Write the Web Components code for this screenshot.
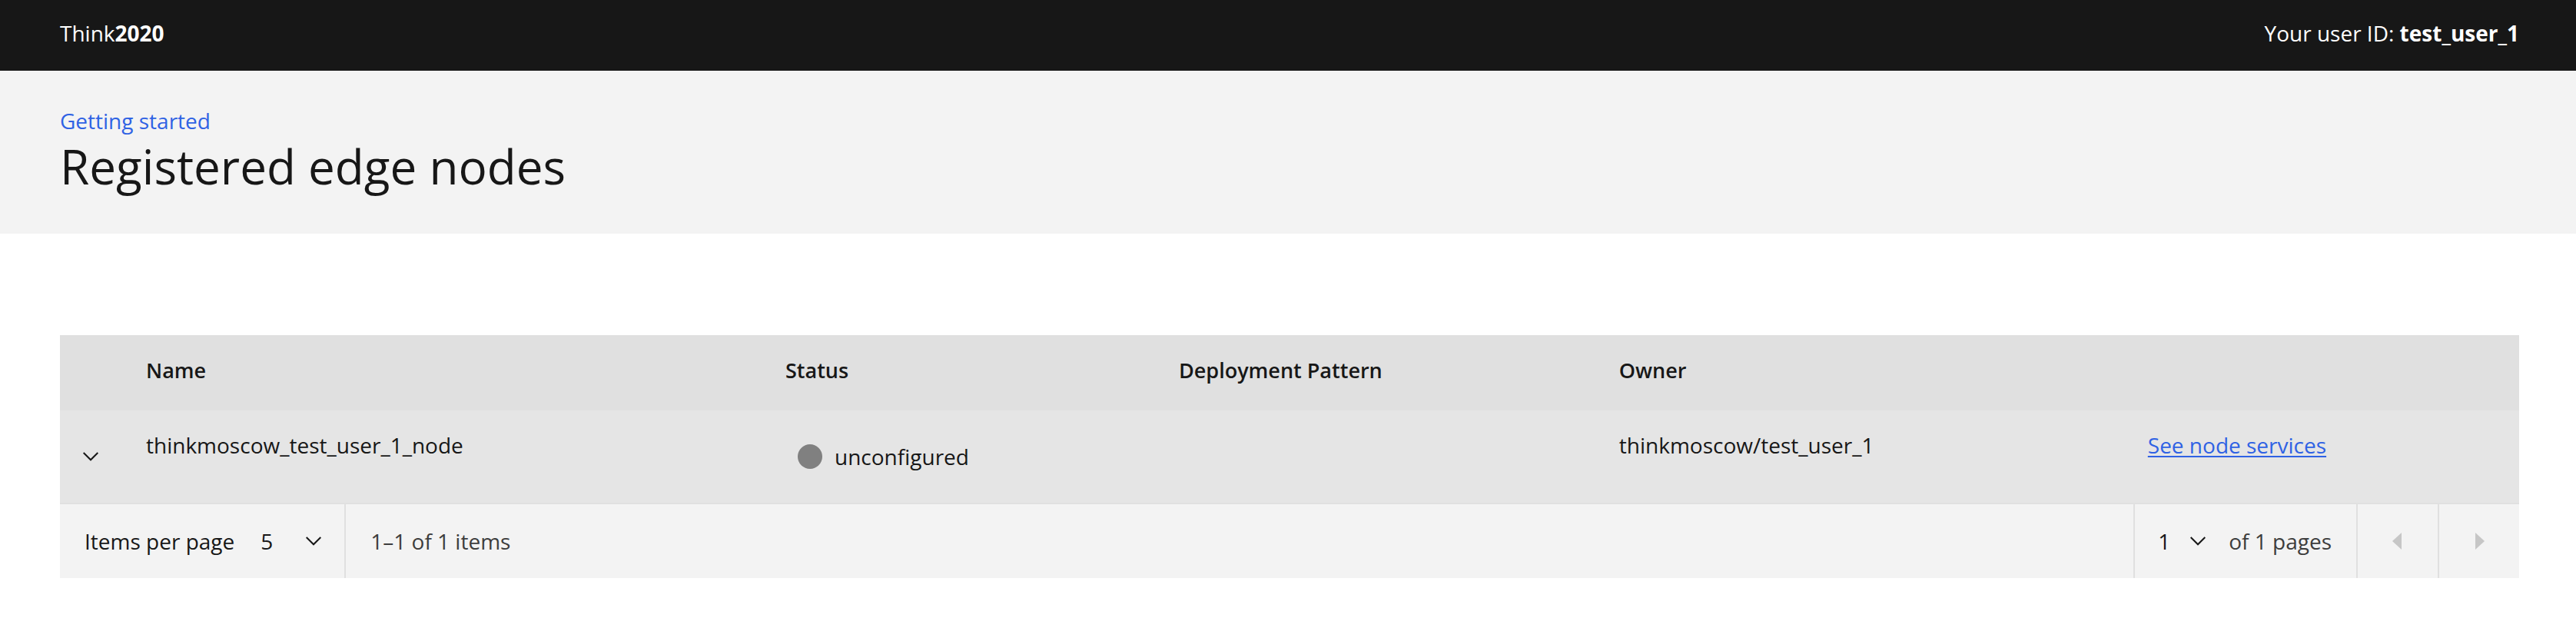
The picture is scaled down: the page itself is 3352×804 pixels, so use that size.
<!DOCTYPE html>
<html lang="en">
<head>
<meta charset="utf-8">
<title>Registered edge nodes</title>
<style>
  body {
    margin: 0;
    background: #fff;
    color: #171717;
    font: 28px/36px "Open Sans", sans-serif;
    --start: 78px;
    --end: 74px;
    --link: #2f62e4;
    --line: #e0e0e0;
    --layer: #f3f3f3;
  }
  main { padding: 132px var(--end) 52px var(--start); }
</style>
</head>
<body>
<app-header>
  <span>Think<b>2020</b></span>
  <span slot="user">Your user ID: <b>test_user_1</b></span>
</app-header>
<page-banner heading="Registered edge nodes">
  <a slot="crumb" href="#start">Getting started</a>
</page-banner>
<main>
  <node-table></node-table>
  <table-pagination></table-pagination>
</main>

<script>
const chevron = '<svg class="chevron" width="20" height="12" viewBox="0 0 20 12" fill="none" stroke="#171717" stroke-width="2" aria-hidden="true"><path d="M.7 1 10 10.3 19.3 1"/></svg>';

function define(name, html) {
  const template = document.createElement('template');
  customElements.define(name, class extends HTMLElement {
    connectedCallback() {
      if (this.shadowRoot) return;
      template.innerHTML = html(this);
      this.attachShadow({ mode: 'open' }).append(template.content.cloneNode(true));
    }
  });
}

define('app-header', () => `
  <style>
    :host { display: block; }
    header { display: flex; justify-content: space-between; padding: 25px var(--end) 31px var(--start); background: #171717; color: #fff; }
    ::slotted(span) { white-space: nowrap; }
  </style>
  <header><slot></slot><slot name="user"></slot></header>`);

define('page-banner', el => `
  <style>
    :host { display: block; padding: 47px var(--end) 47px var(--start); background: var(--layer); }
    nav { display: flex; }
    ::slotted(a) { color: var(--link); text-decoration: none; }
    h1 { margin: 0; font-size: 62px; line-height: 82px; font-weight: 400; }
  </style>
  <nav><slot name="crumb"></slot></nav>
  <h1>${el.getAttribute('heading')}</h1>`);

define('node-status', () => `
  <style>
    :host { display: flex; align-items: center; gap: 16px; padding-left: 16px; }
    i { width: 32px; height: 32px; border-radius: 50%; background: #808080; }
  </style>
  <i></i><slot></slot>`);

define('node-table', () => `
  <style>
    :host { display: block; }
    table { width: 100%; table-layout: fixed; border-collapse: separate; border-spacing: 0; }
    .toggle { width: 80px; }
    .name { width: 26%; }
    .status { width: 16%; }
    .pattern { width: 17.9%; }
    .owner { width: 21.5%; }
    th, td { box-sizing: border-box; padding: 27px 32px 0; text-align: left; vertical-align: top; }
    th { height: 98px; padding-top: 28px; background: var(--line); font-size: 27px; font-weight: 600; }
    td { height: 122px; background: #e5e5e5; border-bottom: 2px solid var(--line); }
    td.mid { padding-top: 0; vertical-align: middle; }
    td:first-child { padding: 0; }
    button { display: flex; width: 80px; height: 80px; align-items: center; justify-content: center; margin: 0; padding: 0; border: 0; background: none; }
    a { color: var(--link); text-decoration-thickness: 2px; text-underline-offset: 3px; }
  </style>
  <table>
    <colgroup><col class="toggle"><col class="name"><col class="status"><col class="pattern"><col class="owner"><col></colgroup>
    <thead><tr><th></th><th scope="col">Name</th><th scope="col">Status</th><th scope="col">Deployment Pattern</th><th scope="col">Owner</th><th></th></tr></thead>
    <tbody><tr>
      <td class="mid"><button type="button" aria-label="Expand row" aria-expanded="false">${chevron}</button></td>
      <td>thinkmoscow_test_user_1_node</td>
      <td class="mid"><node-status>unconfigured</node-status></td>
      <td></td>
      <td>thinkmoscow/test_user_1</td>
      <td><a href="#services">See node services</a></td>
    </tr></tbody>
  </table>`);

define('table-pagination', () => `
  <style>
    :host { display: flex; height: 96px; background: var(--layer); color: #3d3d3d; white-space: nowrap; }
    div { display: flex; align-items: center; }
    label { padding-left: 32px; color: #171717; }
    .select { position: relative; align-self: stretch; width: 143px; }
    .page .select { width: 122px; }
    select { appearance: none; width: 100%; height: 100%; margin: 0; padding: 0 50px 0 34px; border: 0; border-radius: 0; background: none; color: #171717; font: inherit; }
    .page select { padding-left: 30px; }
    .chevron { position: absolute; right: 30px; top: 42px; pointer-events: none; }
    .range { flex: 1; padding-left: 32px; border-left: 2px solid var(--line); }
    .page { padding-right: 32px; border-left: 2px solid var(--line); }
    button { display: flex; align-items: center; justify-content: center; width: 106px; margin: 0; padding: 0; border: 0; border-left: 2px solid var(--line); background: none; }
  </style>
  <div><label for="size">Items per page</label>
    <div class="select"><select id="size"><option>5</option></select>${chevron}</div></div>
  <div class="range">1–1 of 1 items</div>
  <div class="page">
    <div class="select"><select aria-label="Page number"><option>1</option></select>${chevron}</div>
    <span>of 1 pages</span></div>
  <button type="button" aria-label="Previous page" disabled><svg width="32" height="32" fill="#c6c6c6"><path d="M21 5v22L9 16z"/></svg></button>
  <button type="button" aria-label="Next page" disabled><svg width="32" height="32" fill="#c6c6c6"><path d="M11 5v22l12-11z"/></svg></button>`);
</script>
</body>
</html>
